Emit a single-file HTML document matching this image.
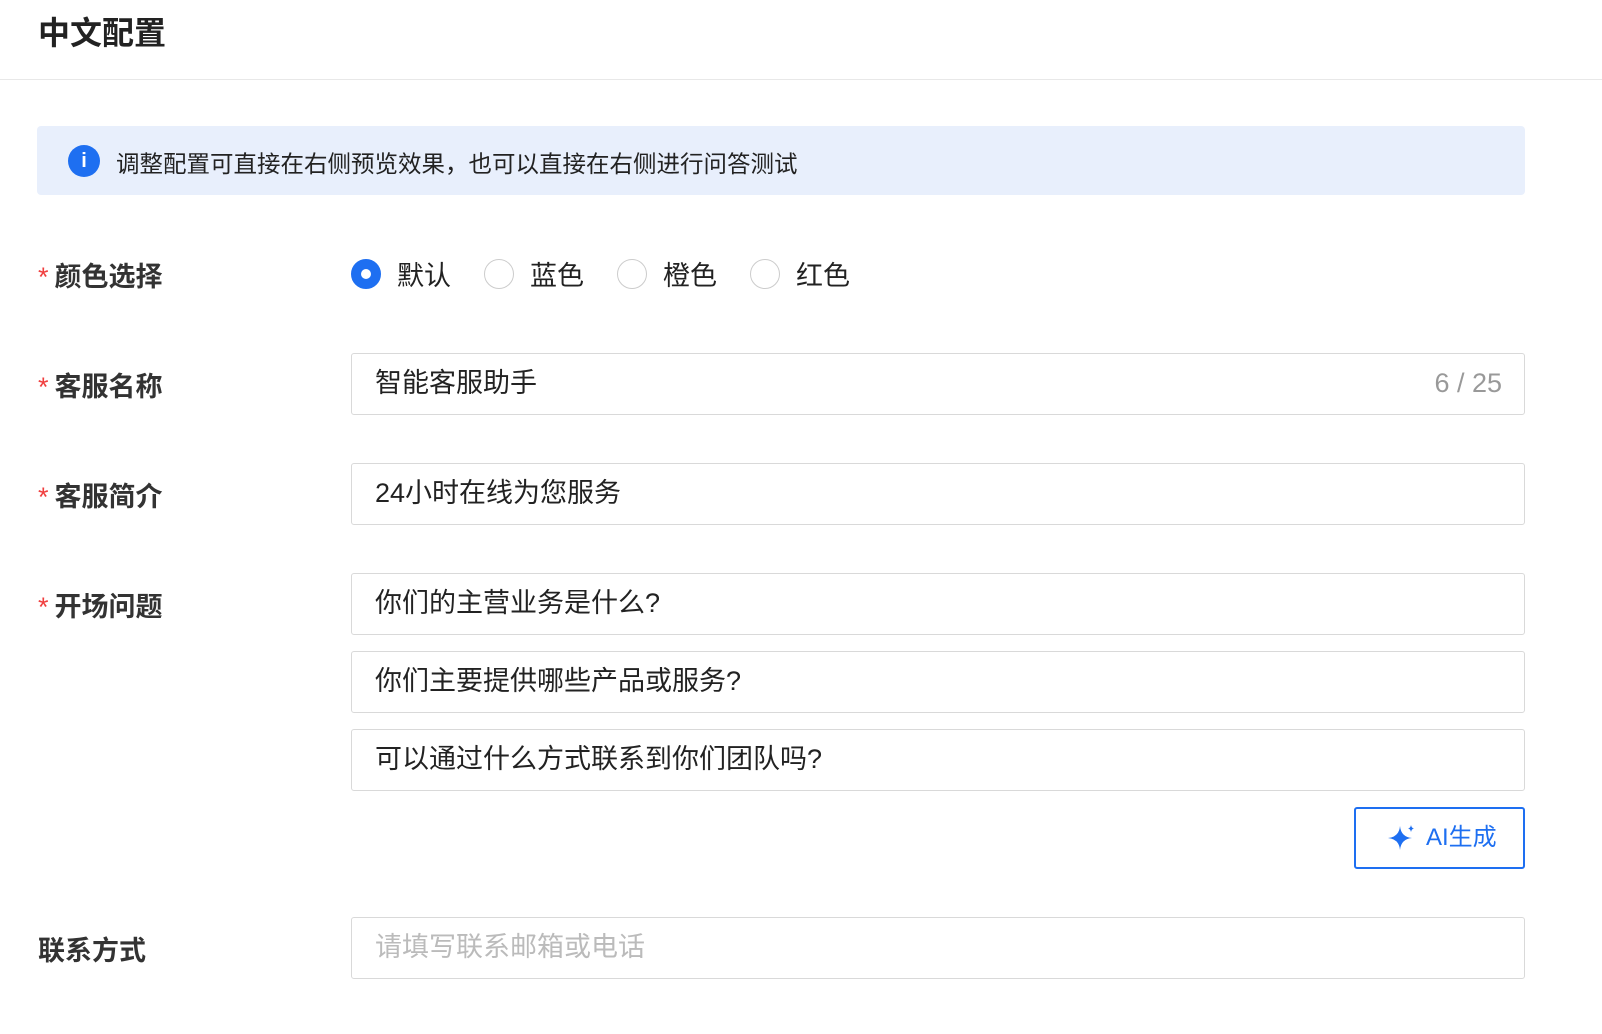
<!DOCTYPE html><html><head><meta charset="utf-8"><style>
body{margin:0;width:1602px;height:1034px;background:#fff;font-family:"Liberation Sans","Noto Sans CJK SC",sans-serif;color:#222;position:relative;overflow:hidden}
.a{position:absolute}
.h{left:38px;top:8px;font-size:32px;font-weight:bold}
.line{left:0;top:79px;width:1602px;height:1px;background:#e8e8e8}
.info{left:37px;top:126px;width:1488px;height:69px;background:#e8effc;border-radius:4px}
.lbl{left:38px;font-size:27px;font-weight:bold;color:#333}
.lbl b{color:#f04040;font-weight:normal;margin-right:6px}
.inp{left:351px;height:62px;border:1.5px solid #d9d9d9;border-radius:3px;font-size:27px;line-height:59px;padding-left:23px;box-sizing:border-box;width:1174px}
.r{width:30px;height:30px;border-radius:50%;border:1.5px solid #ccc;box-sizing:border-box;top:259px}
.rt{top:254px;font-size:27px}
</style></head><body>
<div class="a h">中文配置</div><div class="a line"></div>
<div class="a info"></div>
<div class="a" style="left:68px;top:145px;width:32px;height:32px;border-radius:50%;background:#1e6ff1;color:#fff;font-size:20px;font-weight:bold;text-align:center;line-height:32px">i</div>
<div class="a" style="left:116px;top:145px;font-size:23.5px;color:#222">调整配置可直接在右侧预览效果，也可以直接在右侧进行问答测试</div>
<div class="a lbl" style="top:255px"><b>*</b>颜色选择</div>
<div class="a r" style="left:351px;border:10px solid #1e6ff1"></div><div class="a rt" style="left:397px">默认</div>
<div class="a r" style="left:484px"></div><div class="a rt" style="left:530px">蓝色</div>
<div class="a r" style="left:617px"></div><div class="a rt" style="left:663px">橙色</div>
<div class="a r" style="left:750px"></div><div class="a rt" style="left:796px">红色</div>
<div class="a lbl" style="top:365px"><b>*</b>客服名称</div>
<div class="a inp" style="top:353px">智能客服助手<span style="position:absolute;right:22px;color:#999">6 / 25</span></div>
<div class="a lbl" style="top:475px"><b>*</b>客服简介</div>
<div class="a inp" style="top:463px">24小时在线为您服务</div>
<div class="a lbl" style="top:585px"><b>*</b>开场问题</div>
<div class="a inp" style="top:573px">你们的主营业务是什么?</div>
<div class="a inp" style="top:651px">你们主要提供哪些产品或服务?</div>
<div class="a inp" style="top:729px">可以通过什么方式联系到你们团队吗?</div>
<div class="a" style="left:1354px;top:807px;width:171px;height:62px;border:2px solid #1e6ff1;border-radius:3px;box-sizing:border-box;color:#1e6ff1;font-size:24px;line-height:58px">
<svg class="a" style="left:32px;top:15px" width="30" height="28" viewBox="0 0 30 28"><path d="M12 2 Q13 13 24 14 Q13 15 12 26 Q11 15 0 14 Q11 13 12 2Z" fill="#1e6ff1"/><path d="M23 1 Q23.5 4 26 4.5 Q23.5 5 23 8 Q22.5 5 20 4.5 Q22.5 4 23 1Z" fill="#1e6ff1"/></svg>
<span style="position:absolute;left:70px">AI生成</span></div>
<div class="a lbl" style="top:929px">联系方式</div>
<div class="a inp" style="top:917px;color:#bbb">请填写联系邮箱或电话</div>
</body></html>
